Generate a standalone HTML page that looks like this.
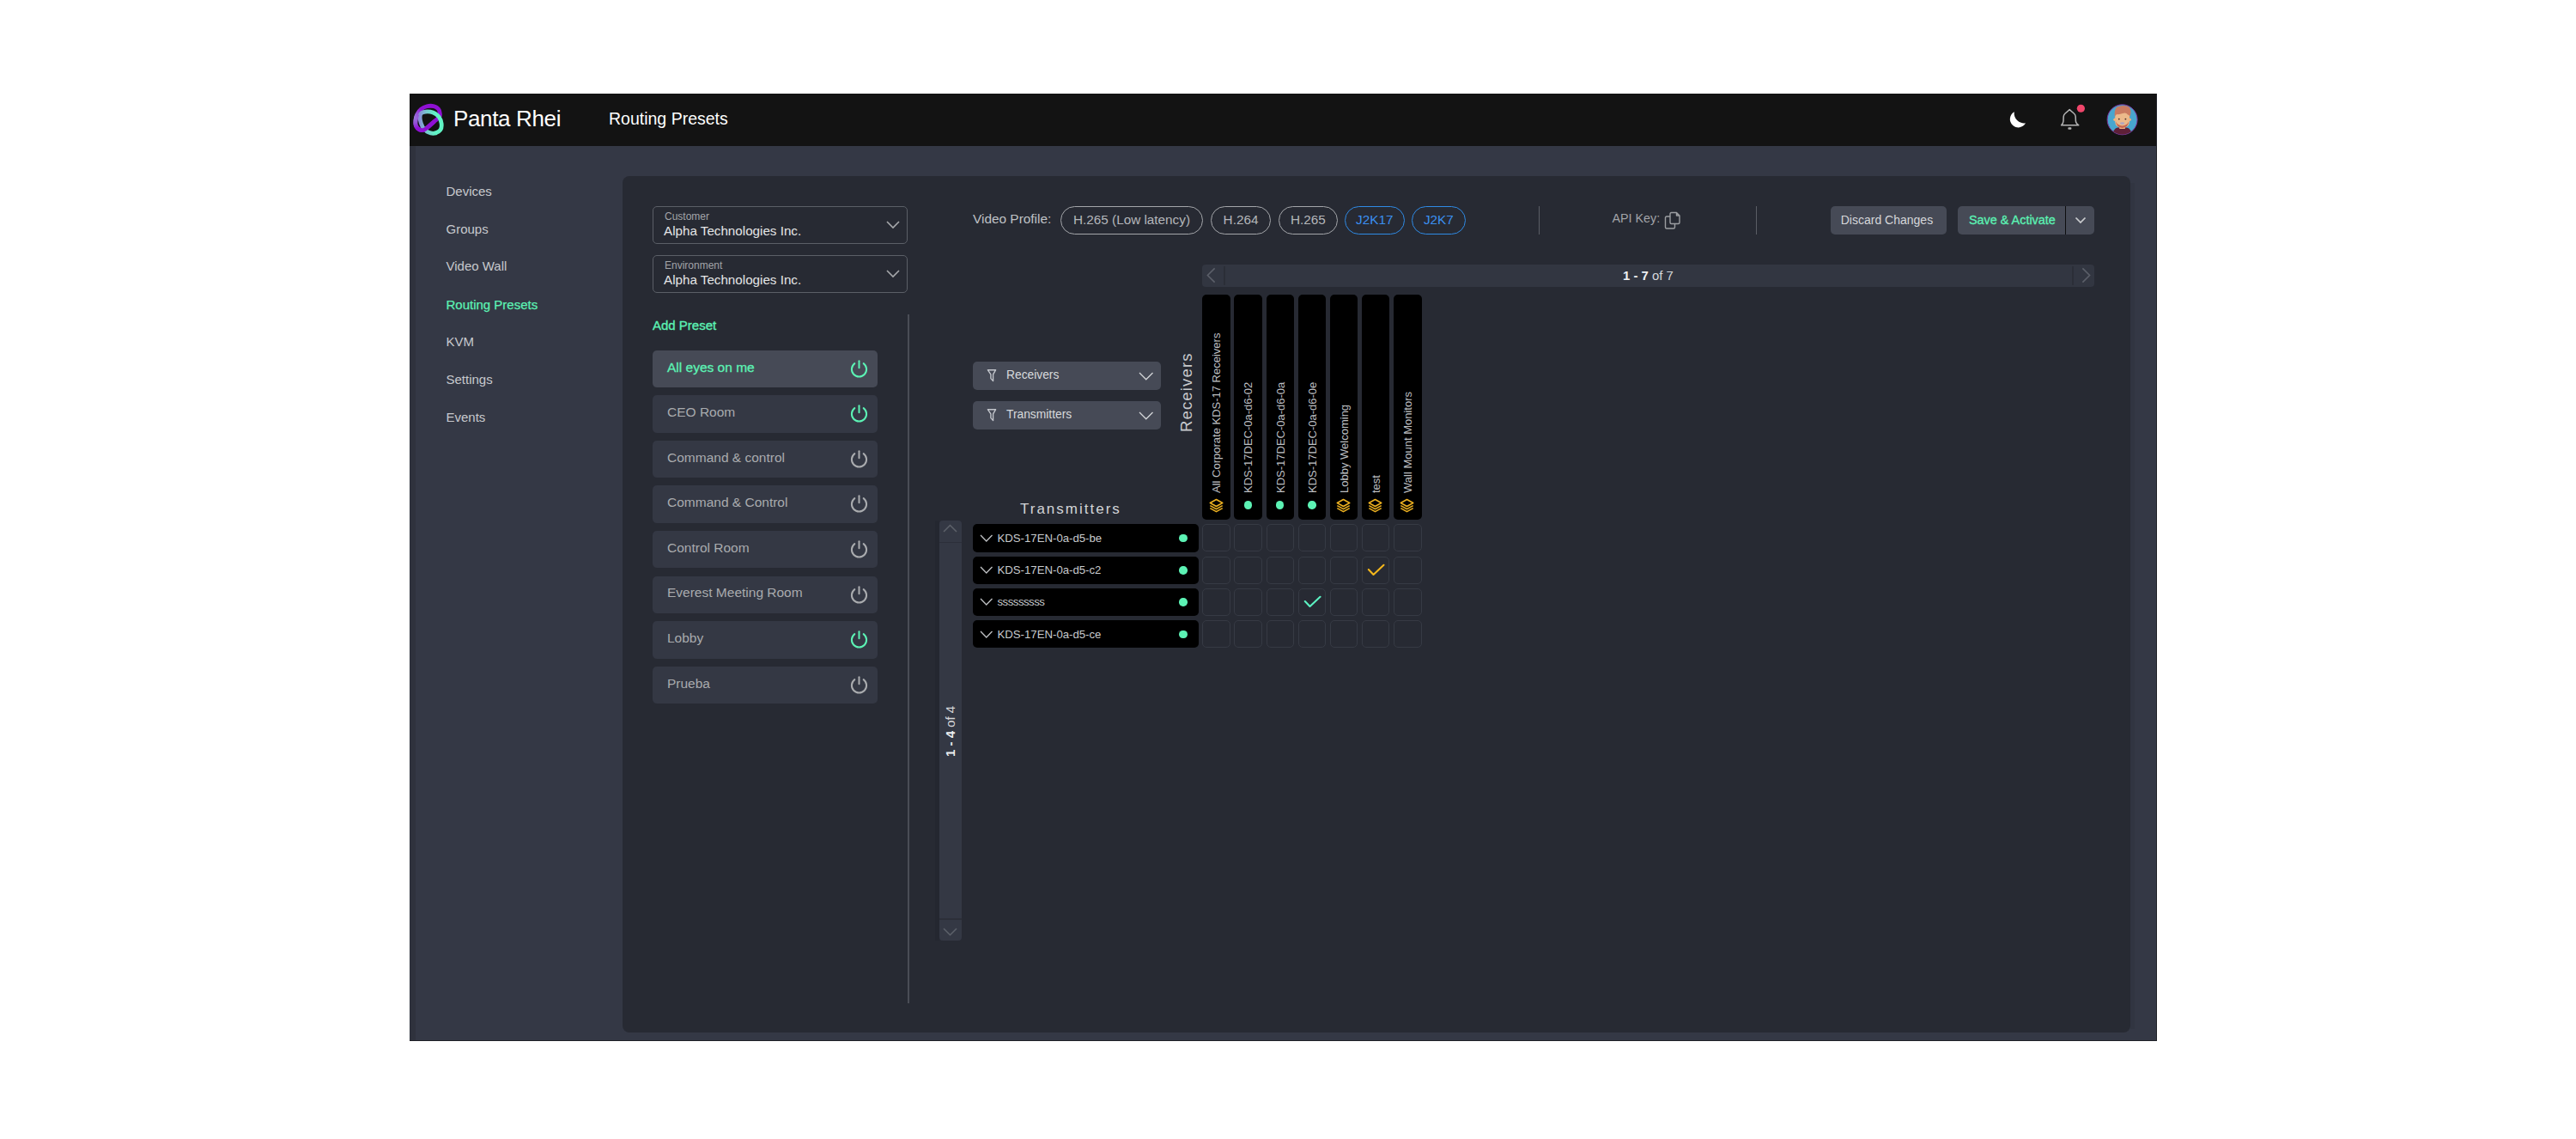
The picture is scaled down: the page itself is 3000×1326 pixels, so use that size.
<!DOCTYPE html><html><head><meta charset="utf-8"><style>
html,body{margin:0;padding:0;background:#fff;width:3000px;height:1326px;overflow:hidden}
body{position:relative;font-family:"Liberation Sans",sans-serif}
.t{position:absolute;white-space:nowrap;line-height:1}
.r{position:absolute;box-sizing:border-box}
svg.r{overflow:visible}
</style></head><body>
<div class="r" style="left:477.00px;top:109.00px;width:2035.00px;height:1103.00px;background:#343845;border-radius:0px;"></div>
<div class="r" style="left:477.00px;top:170.00px;width:7.00px;height:1042.00px;background:#2f323d;border-radius:0px;"></div>
<div class="r" style="left:477.00px;top:109.00px;width:2035.00px;height:61.00px;background:#131313;border-radius:0px;"></div>
<svg class="r" style="left:0;top:0" width="3000" height="300" viewBox="0 0 3000 300">
<defs>
<linearGradient id="lg" x1="488" y1="0" x2="507" y2="0" gradientUnits="userSpaceOnUse"><stop offset="0" stop-color="#8a8ad8"/><stop offset="0.45" stop-color="#78c8d0"/><stop offset="1" stop-color="#60f3c4"/></linearGradient>
<radialGradient id="lp" cx="482" cy="137" r="13" gradientUnits="userSpaceOnUse"><stop offset="0" stop-color="#9a78da"/><stop offset="0.5" stop-color="#9450d6"/><stop offset="1" stop-color="#8f10d4"/></radialGradient>
</defs>
<path d="M 511.61 136.09 C 510.16 138.05 506.33 140.79 503.50 143.23 C 500.66 145.68 497.09 149.48 494.61 150.77 C 492.13 152.06 490.33 151.67 488.62 150.96 C 486.92 150.25 485.15 148.35 484.37 146.52 C 483.60 144.68 483.76 142.14 483.99 139.95 C 484.21 137.76 484.66 135.51 485.73 133.38 C 486.79 131.26 488.43 128.81 490.36 127.20 C 492.29 125.59 494.80 124.31 497.32 123.73 C 499.83 123.15 503.21 123.18 505.43 123.73 C 507.65 124.27 509.52 125.72 510.64 127.01 C 511.77 128.30 512.03 129.94 512.19 131.45 C 512.35 132.97 513.06 134.12 511.61 136.09 Z" fill="none" stroke="url(#lp)" stroke-width="4.8"/>
<path d="M 492.29 148.06 C 491.42 146.39 489.78 142.53 489.40 139.95 C 489.01 137.38 488.98 134.25 489.98 132.61 C 490.97 130.97 493.00 130.36 495.38 130.10 C 497.77 129.84 501.63 130.07 504.27 131.07 C 506.91 132.06 509.58 133.96 511.22 136.09 C 512.86 138.21 513.83 141.30 514.12 143.81 C 514.41 146.33 514.35 149.25 512.96 151.15 C 511.58 153.05 508.29 154.79 505.81 155.21 C 503.34 155.63 499.96 154.53 498.09 153.67 C 496.22 152.80 495.58 150.93 494.61 150.00 C 493.65 149.06 493.16 149.74 492.29 148.06 Z" fill="none" stroke="url(#lg)" stroke-width="4.8"/>
<path d="M 505.81 141.50 C 503.95 143.04 497.48 149.19 494.61 150.77 C 491.75 152.35 490.33 151.67 488.62 150.96 C 486.92 150.25 485.15 148.35 484.37 146.52 C 483.60 144.68 483.76 142.14 483.99 139.95 C 484.21 137.76 485.44 134.48 485.73 133.38 " fill="none" stroke="url(#lp)" stroke-width="4.8"/>
</svg>
<div class="t" style="left:528.00px;top:125.19px;font-size:26px;color:#ffffff;font-weight:400;letter-spacing:-0.35px;">Panta Rhei</div>
<div class="t" style="left:709.00px;top:129.20px;font-size:19.5px;color:#ffffff;font-weight:400;letter-spacing:0px;">Routing Presets</div>
<svg class="r" style="left:0.00px;top:0.00px;" width="3000" height="300" viewBox="0 0 3000 300"><path d="M 2345.8 130.2 A 9.7 9.7 0 1 0 2359.1 143.2 A 11.44 11.44 0 0 1 2345.8 130.2 Z" fill="#ffffff"/></svg>
<svg class="r" style="left:0.00px;top:0.00px;" width="3000" height="300" viewBox="0 0 3000 300"><path d="M 2400.6 145.8 L 2420.8 145.8 Q 2417.6 144 2417.4 141 L 2417.2 135.8 Q 2417 133.5 2415.5 132.2 L 2410.2 127.6 L 2404.9 132.2 Q 2403.4 133.5 2403.2 135.8 L 2403 141 Q 2402.8 144 2400.6 145.8 Z" fill="none" stroke="#b3b3b3" stroke-width="1.5" stroke-linejoin="round"/><rect x="2408.4" y="148.3" width="4" height="2.4" rx="0.9" fill="#b3b3b3"/><circle cx="2423.4" cy="126.25" r="4.6" fill="#f0466b"/></svg>
<svg class="r" style="left:0.00px;top:0.00px;" width="3000" height="300" viewBox="0 0 3000 300"><defs><clipPath id="av"><circle cx="2471.6" cy="139.3" r="17.2"/></clipPath></defs>
<circle cx="2471.6" cy="139.3" r="17.5" fill="#48a6cf" stroke="#7c2f96" stroke-width="1"/>
<g clip-path="url(#av)">
<path d="M 2459.5 160 Q 2460 150.5 2466 148.6 L 2477 148.6 Q 2483 150.5 2483.5 160 Z" fill="#5e2038"/>
<rect x="2468.3" y="145" width="6.6" height="5" fill="#eeae7e"/>
<path d="M 2463.2 129 L 2480 129 L 2480 142 Q 2479.5 148.5 2471.6 148.8 Q 2463.7 148.5 2463.2 142 Z" fill="#ecb98a"/>
<circle cx="2463" cy="139.2" r="1.7" fill="#efb27e"/><circle cx="2480.2" cy="139.2" r="1.7" fill="#efb27e"/>
<path d="M 2462.8 136 Q 2462 127.5 2465.5 124.6 Q 2471 121.8 2477.5 123.6 Q 2482 125 2481.4 132 L 2480.6 136 Q 2479.8 133.5 2478 133.5 Q 2476 130.5 2472 132 Q 2468 133.5 2465.5 133 Q 2463.8 133.5 2462.8 136 Z" fill="#c97a60"/>
<path d="M 2464 141.5 Q 2464.6 148.2 2471.6 148.9 Q 2478.6 148.2 2479.2 141.5 Q 2477 146 2471.6 146.6 Q 2466.2 146 2464 141.5 Z" fill="#c46552"/>
<ellipse cx="2471.6" cy="143.6" rx="2.7" ry="1.4" fill="#b0a6c4"/>
<circle cx="2467.8" cy="138.6" r="0.95" fill="#4a3028"/><circle cx="2475.4" cy="138.6" r="0.95" fill="#4a3028"/>
</g></svg>
<div class="t" style="left:519.50px;top:214.96px;font-size:15px;color:#c7c9cd;font-weight:400;letter-spacing:0px;">Devices</div>
<div class="t" style="left:519.50px;top:258.56px;font-size:15px;color:#c7c9cd;font-weight:400;letter-spacing:0px;">Groups</div>
<div class="t" style="left:519.50px;top:301.96px;font-size:15px;color:#c7c9cd;font-weight:400;letter-spacing:0px;">Video Wall</div>
<div class="t" style="left:519.50px;top:346.71px;font-size:15px;color:#5cf2b4;font-weight:400;letter-spacing:0px;-webkit-text-stroke:0.25px #5cf2b4">Routing Presets</div>
<div class="t" style="left:519.50px;top:390.16px;font-size:15px;color:#c7c9cd;font-weight:400;letter-spacing:0px;">KVM</div>
<div class="t" style="left:519.50px;top:433.86px;font-size:15px;color:#c7c9cd;font-weight:400;letter-spacing:0px;">Settings</div>
<div class="t" style="left:519.50px;top:477.56px;font-size:15px;color:#c7c9cd;font-weight:400;letter-spacing:0px;">Events</div>
<div class="r" style="left:2511.00px;top:109.00px;width:1.00px;height:1103.00px;background:#202228;border-radius:0px;"></div>
<div class="r" style="left:477.00px;top:1211.00px;width:2035.00px;height:1.00px;background:#202228;border-radius:0px;"></div>
<div class="r" style="left:2480.60px;top:213.00px;width:5.00px;height:985.00px;background:rgba(0,0,0,0.05);border-radius:0px;"></div>
<div class="r" style="left:725.00px;top:205.00px;width:1755.60px;height:996.50px;background:#272a33;border-radius:8px;"></div>
<div class="r" style="left:760.00px;top:240.25px;width:297.20px;height:43.50px;background:transparent;border-radius:5px;border:1px solid #5b5f67"></div>
<div class="t" style="left:774.00px;top:246.47px;font-size:12px;color:#a3a5a9;font-weight:400;letter-spacing:0px;">Customer</div>
<div class="t" style="left:773.00px;top:260.74px;font-size:15.2px;color:#e4e5e6;font-weight:400;letter-spacing:0px;">Alpha Technologies Inc.</div>
<svg class="r" style="left:1031.50px;top:256.75px;" width="16" height="9" viewBox="0 0 16 9"><path d="M 1 1 L 8 8 L 15 1" fill="none" stroke="#a6a8ab" stroke-width="1.6"/></svg>
<div class="r" style="left:760.00px;top:297.25px;width:297.20px;height:43.50px;background:transparent;border-radius:5px;border:1px solid #5b5f67"></div>
<div class="t" style="left:774.00px;top:303.47px;font-size:12px;color:#a3a5a9;font-weight:400;letter-spacing:0px;">Environment</div>
<div class="t" style="left:773.00px;top:317.74px;font-size:15.2px;color:#e4e5e6;font-weight:400;letter-spacing:0px;">Alpha Technologies Inc.</div>
<svg class="r" style="left:1031.50px;top:313.75px;" width="16" height="9" viewBox="0 0 16 9"><path d="M 1 1 L 8 8 L 15 1" fill="none" stroke="#a6a8ab" stroke-width="1.6"/></svg>
<div class="t" style="left:760.00px;top:370.59px;font-size:15px;color:#5cf2b4;font-weight:400;letter-spacing:0px;-webkit-text-stroke:0.35px #5cf2b4">Add Preset</div>
<div class="r" style="left:760.00px;top:407.75px;width:262.00px;height:43.50px;background:#464a56;border-radius:5px;"></div>
<div class="t" style="left:777.00px;top:419.71px;font-size:15.5px;color:#5cf2b4;font-weight:400;letter-spacing:0px;-webkit-text-stroke:0.3px #5cf2b4">All eyes on me</div>
<svg class="r" style="left:990.00px;top:418.75px;" width="21" height="21" viewBox="0 0 21 21"><path d="M 5.32 4.13 A 8.6 8.6 0 1 0 15.68 4.13" fill="none" stroke="#5cf2b4" stroke-width="2" stroke-linecap="round"/><line x1="10.5" y1="1.2" x2="10.5" y2="9.3" stroke="#5cf2b4" stroke-width="2" stroke-linecap="round"/></svg>
<div class="r" style="left:760.00px;top:460.30px;width:262.00px;height:43.50px;background:#343844;border-radius:5px;"></div>
<div class="t" style="left:777.00px;top:472.26px;font-size:15.5px;color:#a9abae;font-weight:400;letter-spacing:0px;">CEO Room</div>
<svg class="r" style="left:990.00px;top:471.30px;" width="21" height="21" viewBox="0 0 21 21"><path d="M 5.32 4.13 A 8.6 8.6 0 1 0 15.68 4.13" fill="none" stroke="#5cf2b4" stroke-width="2" stroke-linecap="round"/><line x1="10.5" y1="1.2" x2="10.5" y2="9.3" stroke="#5cf2b4" stroke-width="2" stroke-linecap="round"/></svg>
<div class="r" style="left:760.00px;top:512.85px;width:262.00px;height:43.50px;background:#343844;border-radius:5px;"></div>
<div class="t" style="left:777.00px;top:524.81px;font-size:15.5px;color:#a9abae;font-weight:400;letter-spacing:0px;">Command &amp; control</div>
<svg class="r" style="left:990.00px;top:523.85px;" width="21" height="21" viewBox="0 0 21 21"><path d="M 5.32 4.13 A 8.6 8.6 0 1 0 15.68 4.13" fill="none" stroke="#a9abae" stroke-width="2" stroke-linecap="round"/><line x1="10.5" y1="1.2" x2="10.5" y2="9.3" stroke="#a9abae" stroke-width="2" stroke-linecap="round"/></svg>
<div class="r" style="left:760.00px;top:565.40px;width:262.00px;height:43.50px;background:#343844;border-radius:5px;"></div>
<div class="t" style="left:777.00px;top:577.36px;font-size:15.5px;color:#a9abae;font-weight:400;letter-spacing:0px;">Command &amp; Control</div>
<svg class="r" style="left:990.00px;top:576.40px;" width="21" height="21" viewBox="0 0 21 21"><path d="M 5.32 4.13 A 8.6 8.6 0 1 0 15.68 4.13" fill="none" stroke="#a9abae" stroke-width="2" stroke-linecap="round"/><line x1="10.5" y1="1.2" x2="10.5" y2="9.3" stroke="#a9abae" stroke-width="2" stroke-linecap="round"/></svg>
<div class="r" style="left:760.00px;top:617.95px;width:262.00px;height:43.50px;background:#343844;border-radius:5px;"></div>
<div class="t" style="left:777.00px;top:629.91px;font-size:15.5px;color:#a9abae;font-weight:400;letter-spacing:0px;">Control Room</div>
<svg class="r" style="left:990.00px;top:628.95px;" width="21" height="21" viewBox="0 0 21 21"><path d="M 5.32 4.13 A 8.6 8.6 0 1 0 15.68 4.13" fill="none" stroke="#a9abae" stroke-width="2" stroke-linecap="round"/><line x1="10.5" y1="1.2" x2="10.5" y2="9.3" stroke="#a9abae" stroke-width="2" stroke-linecap="round"/></svg>
<div class="r" style="left:760.00px;top:670.50px;width:262.00px;height:43.50px;background:#343844;border-radius:5px;"></div>
<div class="t" style="left:777.00px;top:682.46px;font-size:15.5px;color:#a9abae;font-weight:400;letter-spacing:0px;">Everest Meeting Room</div>
<svg class="r" style="left:990.00px;top:681.50px;" width="21" height="21" viewBox="0 0 21 21"><path d="M 5.32 4.13 A 8.6 8.6 0 1 0 15.68 4.13" fill="none" stroke="#a9abae" stroke-width="2" stroke-linecap="round"/><line x1="10.5" y1="1.2" x2="10.5" y2="9.3" stroke="#a9abae" stroke-width="2" stroke-linecap="round"/></svg>
<div class="r" style="left:760.00px;top:723.05px;width:262.00px;height:43.50px;background:#343844;border-radius:5px;"></div>
<div class="t" style="left:777.00px;top:735.01px;font-size:15.5px;color:#a9abae;font-weight:400;letter-spacing:0px;">Lobby</div>
<svg class="r" style="left:990.00px;top:734.05px;" width="21" height="21" viewBox="0 0 21 21"><path d="M 5.32 4.13 A 8.6 8.6 0 1 0 15.68 4.13" fill="none" stroke="#5cf2b4" stroke-width="2" stroke-linecap="round"/><line x1="10.5" y1="1.2" x2="10.5" y2="9.3" stroke="#5cf2b4" stroke-width="2" stroke-linecap="round"/></svg>
<div class="r" style="left:760.00px;top:775.60px;width:262.00px;height:43.50px;background:#343844;border-radius:5px;"></div>
<div class="t" style="left:777.00px;top:787.56px;font-size:15.5px;color:#a9abae;font-weight:400;letter-spacing:0px;">Prueba</div>
<svg class="r" style="left:990.00px;top:786.60px;" width="21" height="21" viewBox="0 0 21 21"><path d="M 5.32 4.13 A 8.6 8.6 0 1 0 15.68 4.13" fill="none" stroke="#a9abae" stroke-width="2" stroke-linecap="round"/><line x1="10.5" y1="1.2" x2="10.5" y2="9.3" stroke="#a9abae" stroke-width="2" stroke-linecap="round"/></svg>
<div class="r" style="left:1057.00px;top:366.00px;width:1.60px;height:801.50px;background:#4a4d56;border-radius:0px;"></div>
<div class="r" style="left:1094.00px;top:606.00px;width:26.00px;height:489.00px;background:#343844;border-radius:4px;"></div>
<div class="r" style="left:1089.00px;top:606.00px;width:5.00px;height:489.00px;background:rgba(0,0,0,0.06);border-radius:0px;"></div>
<svg class="r" style="left:1098.00px;top:610.00px;" width="17" height="10" viewBox="0 0 17 10"><path d="M 1 9 L 8.5 1.5 L 16 9" fill="none" stroke="#5d616a" stroke-width="1.5"/></svg>
<div class="r" style="left:1094.00px;top:630.50px;width:26.00px;height:1.50px;background:#2c2f39;border-radius:0px;"></div>
<div class="r" style="left:1094.00px;top:1069.00px;width:26.00px;height:2.00px;background:#2c2f39;border-radius:0px;"></div>
<svg class="r" style="left:1098.00px;top:1079.50px;" width="17" height="10" viewBox="0 0 17 10"><path d="M 1 1 L 8.5 8.5 L 16 1" fill="none" stroke="#5d616a" stroke-width="1.5"/></svg>
<div class="t" style="left:1098.50px;top:881.00px;font-size:15px;color:#d4d6d9;font-weight:400;letter-spacing:0px;transform-origin:0 0;transform:rotate(-90deg);"><b style="color:#eceef0">1 - 4</b> of 4</div>
<div class="t" style="left:1133.00px;top:246.84px;font-size:15.4px;color:#bfc1c5;font-weight:400;letter-spacing:0px;">Video Profile:</div>
<div class="r" style="left:1235px;top:240px;width:166.00px;height:33px;border:1.3px solid #a4a6aa;border-radius:17px"></div>
<div class="t" style="left:1235px;top:247.61px;width:166.00px;text-align:center;font-size:15.3px;color:#b4b6ba">H.265 (Low latency)</div>
<div class="r" style="left:1410px;top:240px;width:70.00px;height:33px;border:1.3px solid #a4a6aa;border-radius:17px"></div>
<div class="t" style="left:1410px;top:247.61px;width:70.00px;text-align:center;font-size:15.3px;color:#b4b6ba">H.264</div>
<div class="r" style="left:1489px;top:240px;width:68.75px;height:33px;border:1.3px solid #a4a6aa;border-radius:17px"></div>
<div class="t" style="left:1489px;top:247.61px;width:68.75px;text-align:center;font-size:15.3px;color:#b4b6ba">H.265</div>
<div class="r" style="left:1566px;top:240px;width:69.60px;height:33px;border:1.3px solid #2f8be6;border-radius:17px"></div>
<div class="t" style="left:1566px;top:247.61px;width:69.60px;text-align:center;font-size:15.3px;color:#3b8ff0">J2K17</div>
<div class="r" style="left:1643.75px;top:240px;width:63.15px;height:33px;border:1.3px solid #2f8be6;border-radius:17px"></div>
<div class="t" style="left:1643.75px;top:247.61px;width:63.15px;text-align:center;font-size:15.3px;color:#3b8ff0">J2K7</div>
<div class="r" style="left:1792.00px;top:240.00px;width:1.20px;height:32.50px;background:#5a5d65;border-radius:0px;"></div>
<div class="r" style="left:2045.00px;top:240.00px;width:1.20px;height:32.50px;background:#5a5d65;border-radius:0px;"></div>
<div class="t" style="left:1877.50px;top:247.31px;font-size:14.3px;color:#a2a4a8;font-weight:400;letter-spacing:0px;">API Key:</div>
<svg class="r" style="left:1938.00px;top:246.00px;" width="20" height="22" viewBox="0 0 20 22"><path d="M 9.5 1.5 L 14.5 1.5 L 18 5 L 18 13 Q 18 14.5 16.5 14.5 L 8.5 14.5 Q 7 14.5 7 13 L 7 3 Q 7 1.5 8.5 1.5 Z M 14.5 1.5 L 14.5 5 L 18 5" fill="none" stroke="#9c9ea2" stroke-width="1.4" stroke-linejoin="round"/><path d="M 7 6 L 3 6 Q 1.5 6 1.5 7.5 L 1.5 18.5 Q 1.5 20 3 20 L 11 20 Q 12.5 20 12.5 18.5 L 12.5 14.5" fill="none" stroke="#9c9ea2" stroke-width="1.4" stroke-linejoin="round"/></svg>
<div class="r" style="left:2131.50px;top:240.00px;width:135.50px;height:33.00px;background:#464a56;border-radius:5px;"></div>
<div class="t" style="left:2143.75px;top:249.09px;font-size:14px;color:#d5d7da;font-weight:400;letter-spacing:0px;">Discard Changes</div>
<div class="r" style="left:2280.00px;top:240.00px;width:158.75px;height:33.00px;background:#464a56;border-radius:5px;"></div>
<div class="r" style="left:2405.00px;top:240.00px;width:1.30px;height:33.00px;background:#0d0e10;border-radius:0px;"></div>
<div class="t" style="left:2293.00px;top:248.89px;font-size:14.4px;color:#5cf2b4;font-weight:400;letter-spacing:0px;-webkit-text-stroke:0.3px #5cf2b4">Save &amp; Activate</div>
<svg class="r" style="left:2416.00px;top:252.00px;" width="14" height="9" viewBox="0 0 14 9"><path d="M 1.5 1.5 L 7 7 L 12.5 1.5" fill="none" stroke="#c9cbce" stroke-width="1.7"/></svg>
<div class="r" style="left:1400.00px;top:307.50px;width:1038.75px;height:26.25px;background:#323641;border-radius:4px;"></div>
<div class="r" style="left:1424.50px;top:309.50px;width:2.00px;height:22.50px;background:#2b2e37;border-radius:0px;"></div>
<div class="r" style="left:2412.50px;top:309.50px;width:2.00px;height:22.50px;background:#2b2e37;border-radius:0px;"></div>
<svg class="r" style="left:1405.00px;top:312.00px;" width="11" height="17" viewBox="0 0 11 17"><path d="M 9.6 0.4 L 1.4 8.5 L 9.6 16.6" fill="none" stroke="#5b5f69" stroke-width="1.6"/></svg>
<svg class="r" style="left:2423.50px;top:312.00px;" width="11" height="17" viewBox="0 0 11 17"><path d="M 1.4 0.4 L 9.6 8.5 L 1.4 16.6" fill="none" stroke="#5b5f69" stroke-width="1.6"/></svg>
<div class="t" style="left:1890.00px;top:313.76px;font-size:14.9px;color:#d6d8db;font-weight:400;letter-spacing:0px;"><b style="color:#eef0f2">1 - 7</b> of 7</div>
<div class="r" style="left:1133.00px;top:421.00px;width:219.00px;height:32.50px;background:#464a56;border-radius:5px;"></div>
<svg class="r" style="left:1148.50px;top:429.00px;" width="13" height="16" viewBox="0 0 13 16"><path d="M 1.3 1.7 L 10.6 1.7 L 7.6 6.9 L 7.6 14.6 L 4.9 11.6 L 4.9 6.9 Z" fill="none" stroke="#c3c6cc" stroke-width="1.35" stroke-linejoin="round"/></svg>
<div class="t" style="left:1172.00px;top:430.19px;font-size:13.8px;color:#d8dadd;font-weight:400;letter-spacing:0px;">Receivers</div>
<svg class="r" style="left:1325.50px;top:432.50px;" width="18" height="10" viewBox="0 0 18 10"><path d="M 1 1 L 8.75 8.75 L 16.5 1" fill="none" stroke="#d3d5d8" stroke-width="1.3"/></svg>
<div class="r" style="left:1133.00px;top:467.00px;width:219.00px;height:32.50px;background:#464a56;border-radius:5px;"></div>
<svg class="r" style="left:1148.50px;top:475.00px;" width="13" height="16" viewBox="0 0 13 16"><path d="M 1.3 1.7 L 10.6 1.7 L 7.6 6.9 L 7.6 14.6 L 4.9 11.6 L 4.9 6.9 Z" fill="none" stroke="#c3c6cc" stroke-width="1.35" stroke-linejoin="round"/></svg>
<div class="t" style="left:1172.00px;top:476.19px;font-size:13.8px;color:#d8dadd;font-weight:400;letter-spacing:0px;">Transmitters</div>
<svg class="r" style="left:1325.50px;top:478.50px;" width="18" height="10" viewBox="0 0 18 10"><path d="M 1 1 L 8.75 8.75 L 16.5 1" fill="none" stroke="#d3d5d8" stroke-width="1.3"/></svg>
<div class="t" style="left:1373.34px;top:502.50px;font-size:18.5px;color:#c9cbce;font-weight:400;letter-spacing:1.15px;transform-origin:0 0;transform:rotate(-90deg);">Receivers</div>
<div class="r" style="left:1400.25px;top:343.00px;width:32.50px;height:262.00px;background:#000000;border-radius:5px;"></div>
<div class="t" style="left:1410.35px;top:574.40px;font-size:13px;color:#bdbfc2;font-weight:400;letter-spacing:0px;transform-origin:0 0;transform:rotate(-90deg);">All Corporate KDS-17 Receivers</div>
<svg class="r" style="left:1407.50px;top:579.50px;" width="17" height="17" viewBox="0 0 17 17"><path d="M 8.5 1.5 L 15.7 5.5 L 8.5 9.5 L 1.3 5.5 Z" fill="none" stroke="#ecb020" stroke-width="1.6" stroke-linejoin="round"/><path d="M 1.3 8.6 L 8.5 12.6 L 15.7 8.6" fill="none" stroke="#ecb020" stroke-width="1.6" stroke-linejoin="round"/><path d="M 1.3 11.6 L 8.5 15.6 L 15.7 11.6" fill="none" stroke="#ecb020" stroke-width="1.6" stroke-linejoin="round"/></svg>
<div class="r" style="left:1437.38px;top:343.00px;width:32.50px;height:262.00px;background:#000000;border-radius:5px;"></div>
<div class="t" style="left:1447.47px;top:574.40px;font-size:13px;color:#bdbfc2;font-weight:400;letter-spacing:0px;transform-origin:0 0;transform:rotate(-90deg);">KDS-17DEC-0a-d6-02</div>
<div class="r" style="left:1448.92px;top:583.3px;width:9.4px;height:9.4px;border-radius:50%;background:#5cf2b4"></div>
<div class="r" style="left:1474.50px;top:343.00px;width:32.50px;height:262.00px;background:#000000;border-radius:5px;"></div>
<div class="t" style="left:1484.60px;top:574.40px;font-size:13px;color:#bdbfc2;font-weight:400;letter-spacing:0px;transform-origin:0 0;transform:rotate(-90deg);">KDS-17DEC-0a-d6-0a</div>
<div class="r" style="left:1486.05px;top:583.3px;width:9.4px;height:9.4px;border-radius:50%;background:#5cf2b4"></div>
<div class="r" style="left:1511.62px;top:343.00px;width:32.50px;height:262.00px;background:#000000;border-radius:5px;"></div>
<div class="t" style="left:1521.72px;top:574.40px;font-size:13px;color:#bdbfc2;font-weight:400;letter-spacing:0px;transform-origin:0 0;transform:rotate(-90deg);">KDS-17DEC-0a-d6-0e</div>
<div class="r" style="left:1523.17px;top:583.3px;width:9.4px;height:9.4px;border-radius:50%;background:#5cf2b4"></div>
<div class="r" style="left:1548.75px;top:343.00px;width:32.50px;height:262.00px;background:#000000;border-radius:5px;"></div>
<div class="t" style="left:1558.85px;top:574.40px;font-size:13px;color:#bdbfc2;font-weight:400;letter-spacing:0px;transform-origin:0 0;transform:rotate(-90deg);">Lobby Welcoming</div>
<svg class="r" style="left:1556.00px;top:579.50px;" width="17" height="17" viewBox="0 0 17 17"><path d="M 8.5 1.5 L 15.7 5.5 L 8.5 9.5 L 1.3 5.5 Z" fill="none" stroke="#ecb020" stroke-width="1.6" stroke-linejoin="round"/><path d="M 1.3 8.6 L 8.5 12.6 L 15.7 8.6" fill="none" stroke="#ecb020" stroke-width="1.6" stroke-linejoin="round"/><path d="M 1.3 11.6 L 8.5 15.6 L 15.7 11.6" fill="none" stroke="#ecb020" stroke-width="1.6" stroke-linejoin="round"/></svg>
<div class="r" style="left:1585.88px;top:343.00px;width:32.50px;height:262.00px;background:#000000;border-radius:5px;"></div>
<div class="t" style="left:1595.97px;top:574.40px;font-size:13px;color:#bdbfc2;font-weight:400;letter-spacing:0px;transform-origin:0 0;transform:rotate(-90deg);">test</div>
<svg class="r" style="left:1593.12px;top:579.50px;" width="17" height="17" viewBox="0 0 17 17"><path d="M 8.5 1.5 L 15.7 5.5 L 8.5 9.5 L 1.3 5.5 Z" fill="none" stroke="#ecb020" stroke-width="1.6" stroke-linejoin="round"/><path d="M 1.3 8.6 L 8.5 12.6 L 15.7 8.6" fill="none" stroke="#ecb020" stroke-width="1.6" stroke-linejoin="round"/><path d="M 1.3 11.6 L 8.5 15.6 L 15.7 11.6" fill="none" stroke="#ecb020" stroke-width="1.6" stroke-linejoin="round"/></svg>
<div class="r" style="left:1623.00px;top:343.00px;width:32.50px;height:262.00px;background:#000000;border-radius:5px;"></div>
<div class="t" style="left:1633.10px;top:574.40px;font-size:13px;color:#bdbfc2;font-weight:400;letter-spacing:0px;transform-origin:0 0;transform:rotate(-90deg);">Wall Mount Monitors</div>
<svg class="r" style="left:1630.25px;top:579.50px;" width="17" height="17" viewBox="0 0 17 17"><path d="M 8.5 1.5 L 15.7 5.5 L 8.5 9.5 L 1.3 5.5 Z" fill="none" stroke="#ecb020" stroke-width="1.6" stroke-linejoin="round"/><path d="M 1.3 8.6 L 8.5 12.6 L 15.7 8.6" fill="none" stroke="#ecb020" stroke-width="1.6" stroke-linejoin="round"/><path d="M 1.3 11.6 L 8.5 15.6 L 15.7 11.6" fill="none" stroke="#ecb020" stroke-width="1.6" stroke-linejoin="round"/></svg>
<div class="t" style="left:1188.00px;top:584.36px;font-size:17px;color:#d3d5d8;font-weight:400;letter-spacing:2.0px;">Transmitters</div>
<div class="r" style="left:1133.00px;top:610.40px;width:262.60px;height:32.25px;background:#000000;border-radius:5px;"></div>
<svg class="r" style="left:1140.50px;top:621.90px;" width="16" height="10" viewBox="0 0 16 10"><path d="M 1 1 L 7.75 8 L 14.5 1" fill="none" stroke="#bfc1c4" stroke-width="1.3"/></svg>
<div class="t" style="left:1161.50px;top:620.02px;font-size:13.2px;color:#c9cbce;font-weight:400;letter-spacing:0px;">KDS-17EN-0a-d5-be</div>
<div class="r" style="left:1373.30px;top:622.05px;width:9.4px;height:9.4px;border-radius:50%;background:#5cf2b4"></div>
<div class="r" style="left:1400.25px;top:610.40px;width:32.50px;height:32.00px;background:transparent;border-radius:5px;border:1px solid #363a44"></div>
<div class="r" style="left:1437.38px;top:610.40px;width:32.50px;height:32.00px;background:transparent;border-radius:5px;border:1px solid #363a44"></div>
<div class="r" style="left:1474.50px;top:610.40px;width:32.50px;height:32.00px;background:transparent;border-radius:5px;border:1px solid #363a44"></div>
<div class="r" style="left:1511.62px;top:610.40px;width:32.50px;height:32.00px;background:transparent;border-radius:5px;border:1px solid #363a44"></div>
<div class="r" style="left:1548.75px;top:610.40px;width:32.50px;height:32.00px;background:transparent;border-radius:5px;border:1px solid #363a44"></div>
<div class="r" style="left:1585.88px;top:610.40px;width:32.50px;height:32.00px;background:transparent;border-radius:5px;border:1px solid #363a44"></div>
<div class="r" style="left:1623.00px;top:610.40px;width:32.50px;height:32.00px;background:transparent;border-radius:5px;border:1px solid #363a44"></div>
<div class="r" style="left:1133.00px;top:647.60px;width:262.60px;height:32.25px;background:#000000;border-radius:5px;"></div>
<svg class="r" style="left:1140.50px;top:659.10px;" width="16" height="10" viewBox="0 0 16 10"><path d="M 1 1 L 7.75 8 L 14.5 1" fill="none" stroke="#bfc1c4" stroke-width="1.3"/></svg>
<div class="t" style="left:1161.50px;top:657.22px;font-size:13.2px;color:#c9cbce;font-weight:400;letter-spacing:0px;">KDS-17EN-0a-d5-c2</div>
<div class="r" style="left:1373.30px;top:659.25px;width:9.4px;height:9.4px;border-radius:50%;background:#5cf2b4"></div>
<div class="r" style="left:1400.25px;top:647.60px;width:32.50px;height:32.00px;background:transparent;border-radius:5px;border:1px solid #363a44"></div>
<div class="r" style="left:1437.38px;top:647.60px;width:32.50px;height:32.00px;background:transparent;border-radius:5px;border:1px solid #363a44"></div>
<div class="r" style="left:1474.50px;top:647.60px;width:32.50px;height:32.00px;background:transparent;border-radius:5px;border:1px solid #363a44"></div>
<div class="r" style="left:1511.62px;top:647.60px;width:32.50px;height:32.00px;background:transparent;border-radius:5px;border:1px solid #363a44"></div>
<div class="r" style="left:1548.75px;top:647.60px;width:32.50px;height:32.00px;background:transparent;border-radius:5px;border:1px solid #363a44"></div>
<div class="r" style="left:1585.88px;top:647.60px;width:32.50px;height:32.00px;background:transparent;border-radius:5px;border:1px solid #363a44"></div>
<div class="r" style="left:1623.00px;top:647.60px;width:32.50px;height:32.00px;background:transparent;border-radius:5px;border:1px solid #363a44"></div>
<div class="r" style="left:1133.00px;top:684.80px;width:262.60px;height:32.25px;background:#000000;border-radius:5px;"></div>
<svg class="r" style="left:1140.50px;top:696.30px;" width="16" height="10" viewBox="0 0 16 10"><path d="M 1 1 L 7.75 8 L 14.5 1" fill="none" stroke="#bfc1c4" stroke-width="1.3"/></svg>
<div class="t" style="left:1161.50px;top:694.42px;font-size:13.2px;color:#c9cbce;font-weight:400;letter-spacing:-0.5px;">sssssssss</div>
<div class="r" style="left:1373.30px;top:696.45px;width:9.4px;height:9.4px;border-radius:50%;background:#5cf2b4"></div>
<div class="r" style="left:1400.25px;top:684.80px;width:32.50px;height:32.00px;background:transparent;border-radius:5px;border:1px solid #363a44"></div>
<div class="r" style="left:1437.38px;top:684.80px;width:32.50px;height:32.00px;background:transparent;border-radius:5px;border:1px solid #363a44"></div>
<div class="r" style="left:1474.50px;top:684.80px;width:32.50px;height:32.00px;background:transparent;border-radius:5px;border:1px solid #363a44"></div>
<div class="r" style="left:1511.62px;top:684.80px;width:32.50px;height:32.00px;background:transparent;border-radius:5px;border:1px solid #363a44"></div>
<div class="r" style="left:1548.75px;top:684.80px;width:32.50px;height:32.00px;background:transparent;border-radius:5px;border:1px solid #363a44"></div>
<div class="r" style="left:1585.88px;top:684.80px;width:32.50px;height:32.00px;background:transparent;border-radius:5px;border:1px solid #363a44"></div>
<div class="r" style="left:1623.00px;top:684.80px;width:32.50px;height:32.00px;background:transparent;border-radius:5px;border:1px solid #363a44"></div>
<div class="r" style="left:1133.00px;top:722.00px;width:262.60px;height:32.25px;background:#000000;border-radius:5px;"></div>
<svg class="r" style="left:1140.50px;top:733.50px;" width="16" height="10" viewBox="0 0 16 10"><path d="M 1 1 L 7.75 8 L 14.5 1" fill="none" stroke="#bfc1c4" stroke-width="1.3"/></svg>
<div class="t" style="left:1161.50px;top:731.62px;font-size:13.2px;color:#c9cbce;font-weight:400;letter-spacing:0px;">KDS-17EN-0a-d5-ce</div>
<div class="r" style="left:1373.30px;top:733.65px;width:9.4px;height:9.4px;border-radius:50%;background:#5cf2b4"></div>
<div class="r" style="left:1400.25px;top:722.00px;width:32.50px;height:32.00px;background:transparent;border-radius:5px;border:1px solid #363a44"></div>
<div class="r" style="left:1437.38px;top:722.00px;width:32.50px;height:32.00px;background:transparent;border-radius:5px;border:1px solid #363a44"></div>
<div class="r" style="left:1474.50px;top:722.00px;width:32.50px;height:32.00px;background:transparent;border-radius:5px;border:1px solid #363a44"></div>
<div class="r" style="left:1511.62px;top:722.00px;width:32.50px;height:32.00px;background:transparent;border-radius:5px;border:1px solid #363a44"></div>
<div class="r" style="left:1548.75px;top:722.00px;width:32.50px;height:32.00px;background:transparent;border-radius:5px;border:1px solid #363a44"></div>
<div class="r" style="left:1585.88px;top:722.00px;width:32.50px;height:32.00px;background:transparent;border-radius:5px;border:1px solid #363a44"></div>
<div class="r" style="left:1623.00px;top:722.00px;width:32.50px;height:32.00px;background:transparent;border-radius:5px;border:1px solid #363a44"></div>
<svg class="r" style="left:1592.00px;top:656.00px;" width="22" height="16" viewBox="0 0 22 16"><path d="M 1.8 7 L 7.5 13 L 19.5 1.8" fill="none" stroke="#f3b61c" stroke-width="2.1" stroke-linecap="round" stroke-linejoin="round"/></svg>
<svg class="r" style="left:1518.00px;top:693.00px;" width="22" height="16" viewBox="0 0 22 16"><path d="M 1.8 7 L 7.5 13 L 19.5 1.8" fill="none" stroke="#5cf2c2" stroke-width="2.1" stroke-linecap="round" stroke-linejoin="round"/></svg>
</body></html>
